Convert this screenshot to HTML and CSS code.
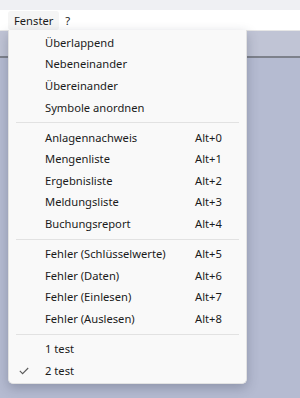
FILE: index.html
```html
<!DOCTYPE html>
<html lang="de">
<head>
<meta charset="utf-8">
<link rel="stylesheet" href="styles.css">
</head>
<body>
<div class="window">
  <div class="titlebar"></div>
  <div class="menubar">
    <span class="mitem open">Fenster</span>
    <span class="mitem">?</span>
  </div>
  <div class="client">
    <div class="child-caption"></div>
  </div>
</div>
<div class="dropdown">
  <div class="row"><span class="chk"></span><span class="lbl">Überlappend</span><span class="key"></span></div>
  <div class="row"><span class="chk"></span><span class="lbl">Nebeneinander</span><span class="key"></span></div>
  <div class="row"><span class="chk"></span><span class="lbl">Übereinander</span><span class="key"></span></div>
  <div class="row"><span class="chk"></span><span class="lbl">Symbole anordnen</span><span class="key"></span></div>
  <div class="sep"></div>
  <div class="row"><span class="chk"></span><span class="lbl">Anlagennachweis</span><span class="key">Alt+0</span></div>
  <div class="row"><span class="chk"></span><span class="lbl">Mengenliste</span><span class="key">Alt+1</span></div>
  <div class="row"><span class="chk"></span><span class="lbl">Ergebnisliste</span><span class="key">Alt+2</span></div>
  <div class="row"><span class="chk"></span><span class="lbl">Meldungsliste</span><span class="key">Alt+3</span></div>
  <div class="row"><span class="chk"></span><span class="lbl">Buchungsreport</span><span class="key">Alt+4</span></div>
  <div class="sep"></div>
  <div class="row"><span class="chk"></span><span class="lbl">Fehler (Schlüsselwerte)</span><span class="key">Alt+5</span></div>
  <div class="row"><span class="chk"></span><span class="lbl">Fehler (Daten)</span><span class="key">Alt+6</span></div>
  <div class="row"><span class="chk"></span><span class="lbl">Fehler (Einlesen)</span><span class="key">Alt+7</span></div>
  <div class="row"><span class="chk"></span><span class="lbl">Fehler (Auslesen)</span><span class="key">Alt+8</span></div>
  <div class="sep"></div>
  <div class="row"><span class="chk"></span><span class="lbl">1 test</span><span class="key"></span></div>
  <div class="row"><span class="chk"><svg width="10" height="8" viewBox="0 0 10 8"><polyline points="0.8,3.8 3.6,6.6 9.2,1" fill="none" stroke="#5a5a5a" stroke-width="1.1"/></svg></span><span class="lbl">2 test</span><span class="key"></span></div>
</div>
</body>
</html>
```
FILE: styles.css
```css
html, body {
  margin: 0;
  padding: 0;
}
body {
  width: 300px;
  height: 398px;
  overflow: hidden;
  background: #b5bbd1;
  font-family: "Noto Sans", "Open Sans", sans-serif;
  font-size: 11.2px;
  color: #1b1b1b;
  position: relative;
}
.window {
  display: flex;
  flex-direction: column;
  height: 398px;
}
.titlebar {
  height: 10px;
  background: #eff0f3;
}
.menubar {
  height: 19px;
  background: #ffffff;
  border-bottom: 1px solid #e6e6e6;
  display: flex;
  align-items: stretch;
  padding: 1px 0 0 8px;
  box-sizing: content-box;
}
.mitem {
  display: flex;
  align-items: center;
  padding: 0 6px;
  line-height: 16px;
}
.mitem.open {
  background: #f5f5f5;
  border-radius: 3px;
}
.client {
  flex: 1;
  background: #b5bbd1;
}
.child-caption {
  height: 25px;
  background: #c0c4d5;
  border-bottom: 2px solid #7d818b;
}
.dropdown {
  position: absolute;
  left: 8px;
  top: 30px;
  width: 239px;
  height: 354px;
  box-sizing: border-box;
  padding-top: 2px;
  background: #f9f9f9;
  border: 1px solid #e2e2e2;
  border-top: none;
  border-radius: 0 0 5px 5px;
  box-shadow: 0 4px 12px rgba(40, 45, 70, 0.28);
}
.row {
  display: grid;
  grid-template-columns: 36px 150px 1fr;
  height: 21.6px;
  align-items: center;
  line-height: 16px;
  white-space: nowrap;
}
.chk {
  display: flex;
  align-items: center;
  justify-content: flex-start;
  padding-left: 10px;
}
.chk svg {
  display: block;
}
.sep {
  height: 8.5px;
  position: relative;
}
.sep::before {
  content: "";
  position: absolute;
  left: 7px;
  right: 7px;
  top: 4px;
  height: 1px;
  background: #e2e2e2;
}
```
